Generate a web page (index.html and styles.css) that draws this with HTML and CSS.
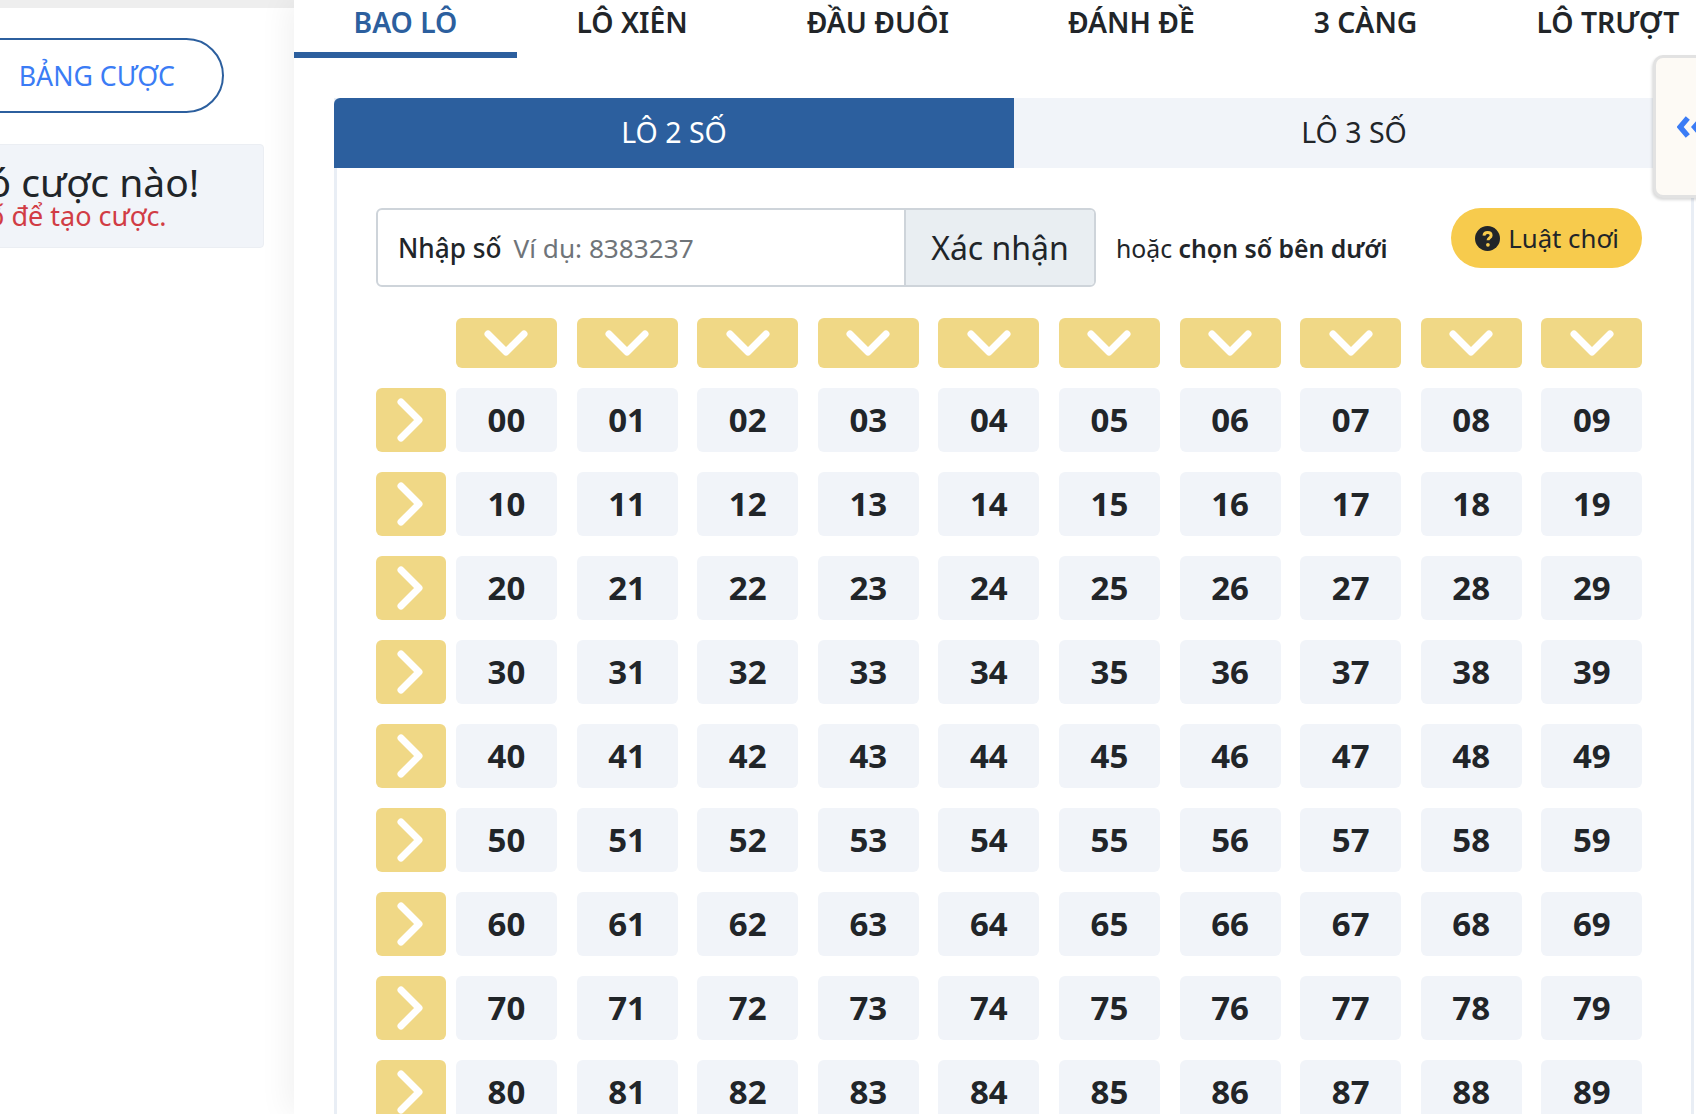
FILE: index.html
```html
<!DOCTYPE html>
<html lang="vi">
<head>
	<meta charset="UTF-8">
	<title>Bao lô</title>
	<link rel="stylesheet" href="styles.css">
</head>
<body>
<div class="page">
	<aside class="side">
		<div class="side-top"></div>
		<a class="pill" href="#">BẢNG CƯỢC</a>
		<div class="empty">
			<p class="empty-title">Không có cược nào!</p>
			<p class="empty-sub">Chọn số để tạo cược.</p>
		</div>
	</aside>
	<main class="main">
		<nav class="tabs">
			<a class="tab active" href="#">BAO LÔ</a>
			<a class="tab" href="#">LÔ XIÊN</a>
			<a class="tab" href="#">ĐẦU ĐUÔI</a>
			<a class="tab" href="#">ĐÁNH ĐỀ</a>
			<a class="tab" href="#">3 CÀNG</a>
			<a class="tab" href="#">LÔ TRƯỢT</a>
		</nav>
		<section class="card">
			<div class="subtabs">
				<a class="subtab on" href="#">LÔ 2 SỐ</a>
				<a class="subtab" href="#">LÔ 3 SỐ</a>
			</div>
			<div class="card-body">
				<div class="entry">
					<div class="entry-group">
						<label class="entry-field"><b>Nhập số</b><span>Ví dụ: 8383237</span></label>
						<button class="entry-btn">Xác nhận</button>
					</div>
					<p class="entry-or">hoặc <b>chọn số bên dưới</b></p>
					<a class="rules" href="#">
						<svg viewBox="0 0 24 24" width="25" height="25"><circle cx="12" cy="12" r="12" fill="#212529"/><path d="M8.600 9.200c.2-2 1.600-3 3.500-3 2 0 3.400 1.100 3.400 2.800 0 2.400-3 2.400-3 4.600" fill="none" stroke="#f7cb4d" stroke-width="2.800"/><circle cx="12.400" cy="18" r="1.800" fill="#f7cb4d"/></svg>
						Luật chơi
					</a>
				</div>
				<div class="board" id="board"></div>
			</div>
		</section>
		<aside class="drawer">
			<svg viewBox="0 0 40 26" width="40" height="26"><path d="M12 3 3.500 13l8.500 10M28 3l-8.500 10 8.500 10" fill="none" stroke="#3b7cf5" stroke-width="6"/></svg>
		</aside>
	</main>
</div>
<script src="board.js"></script>
</body>
</html>
```
FILE: board.js
```js
var board = document.getElementById("board");
var down = '<svg viewBox="0 0 44 27" width="44" height="27"><path d="M4 4 22 22 40 4" fill="none" stroke="#fff" stroke-width="7" stroke-linecap="round" stroke-linejoin="round"/></svg>';
var right = '<svg viewBox="0 0 27 44" width="27" height="44"><path d="M4 4 22 22 4 40" fill="none" stroke="#fff" stroke-width="7" stroke-linecap="round" stroke-linejoin="round"/></svg>';
var html = '<div class="corner"></div>';

for (var c = 0; c < 10; c++) {
	html += '<div class="pick col">' + down + '</div>';
}
for (var r = 0; r < 10; r++) {
	html += '<div class="pick row">' + right + '</div>';
	for (var n = 0; n < 10; n++) {
		html += '<div class="num">' + r + n + '</div>';
	}
}
board.innerHTML = html;
```
FILE: styles.css
```css
* { box-sizing: border-box; }
html, body { margin: 0; height: 100%; overflow: hidden; background: #fff; }
body { font-family: "Noto Sans", "Open Sans", sans-serif; color: #212529; }
a { text-decoration: none; color: inherit; }
p { margin: 0; }

.page { display: flex; height: 1114px; overflow: hidden; }

/* left column, runs off the screen */
.side { width: 294px; flex: none; overflow: hidden; }
.side-top { height: 8px; background: #eee; }
.pill { display: flex; align-items: center; justify-content: flex-end; width: 360px; height: 75px; margin: 30px 0 31px -136px; padding-right: 47px; border: 2px solid #2c5f9e; border-radius: 38px; color: #3b7cf5; font-size: 26.700px; }
.empty { width: 490px; height: 104px; margin-left: -226px; padding-top: 17px; background: #f1f4f9; border: 1px solid #ebeef3; border-radius: 4px; text-align: center; }
.empty-title { font-size: 39px; line-height: 40px; }
.empty-sub { padding-left: 30px; font-size: 27px; line-height: 28px; color: #d13c45; }

.main { position: relative; z-index: 1; flex: 1; min-width: 0; padding-left: 40px; background: #fff; box-shadow: -6px 0 30px rgba(0, 0, 0, .06); }

.tabs { display: flex; height: 58px; margin-left: -40px; font-size: 28.300px; font-weight: 600; white-space: nowrap; }
.tab { padding: 3px 59.500px 0; }
.tab.active { color: #2c5f9e; border-bottom: 6px solid #2c5f9e; }

.card { width: 1360px; margin-top: 40px; border-left: 3px solid #e9eef5; border-right: 3px solid #e9eef5; }
.subtabs { display: flex; height: 70px; margin: 0 -3px; }
.subtab { flex: 1; display: flex; align-items: center; justify-content: center; padding-bottom: 2px; background: #f1f4f9; font-size: 28.500px; }
.subtab.on { background: #2c5f9e; color: #fff; border-radius: 6px 0 0 0; }

.card-body { padding: 40px 49px 0 39px; }

.entry { display: flex; align-items: flex-start; height: 110px; }
.entry-group { display: flex; width: 720px; height: 79px; border: 2px solid #ced4da; border-radius: 6px; overflow: hidden; }
.entry-field { flex: 1; display: flex; align-items: center; gap: 12px; padding-left: 20px; font-size: 26.200px; }
.entry-field b { font-weight: 500; }
.entry-field span { color: #6f7479; }
.entry-btn { width: 190px; border: 0; border-left: 2px solid #ced4da; background: #e9eef2; color: #212529; font: inherit; font-size: 32px; }
.entry-or { margin: 23px 0 0 20px; font-size: 24.800px; white-space: nowrap; }
.entry-or b { font-weight: 600; }
.rules { display: flex; align-items: center; gap: 8px; height: 60px; margin-left: auto; padding: 0 23px 0 24px; background: #f7cb4d; border-radius: 30px; font-size: 25.800px; white-space: nowrap; }

.board { display: grid; grid-template-columns: 60.400px repeat(10, 101px); grid-template-rows: 50px; grid-auto-rows: 64px; column-gap: 19.600px; row-gap: 20px; }
.pick, .num { display: flex; align-items: center; justify-content: center; border-radius: 6px; }
.pick { background: #f0d886; }
.pick.row { margin-right: -9.600px; }
.num { padding-bottom: 2px; background: #f1f4f9; font-size: 33px; font-weight: 700; }

.drawer { position: absolute; left: 1359px; top: 55px; width: 60px; height: 143px; display: flex; align-items: center; padding-left: 21px; background: #fdfaf5; border: 3px solid #e2e2e2; border-right: 0; border-radius: 10px 0 0 10px; box-shadow: -1px 2px 3px rgba(0, 0, 0, .15); }
```
